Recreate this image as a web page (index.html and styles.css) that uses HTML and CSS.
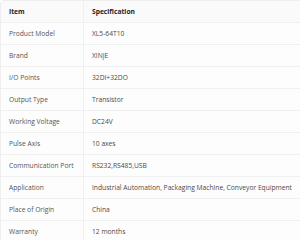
FILE: index.html
```html
<!DOCTYPE html>
<html>
<head>
<meta charset="utf-8">
<link rel="stylesheet" href="styles.css">
</head>
<body>
<div class="wrap">
<table class="spec">
<thead>
<tr><th class="k">Item</th><th>Specification</th></tr>
</thead>
<tbody>
<tr><td class="k">Product Model</td><td>XL5-64T10</td></tr>
<tr><td class="k">Brand</td><td>XINJE</td></tr>
<tr><td class="k">I/O Points</td><td>32DI+32DO</td></tr>
<tr><td class="k">Output Type</td><td>Transistor</td></tr>
<tr><td class="k">Working Voltage</td><td>DC24V</td></tr>
<tr><td class="k">Pulse Axis</td><td>10 axes</td></tr>
<tr><td class="k">Communication Port</td><td>RS232,RS485,USB</td></tr>
<tr><td class="k">Application</td><td>Industrial Automation, Packaging Machine, Conveyor Equipment</td></tr>
<tr><td class="k">Place of Origin</td><td>China</td></tr>
<tr><td class="k">Warranty</td><td>12 months</td></tr>
</tbody>
</table>
</div>
</body>
</html>
```
FILE: styles.css
```css
html, body { margin: 0; padding: 0; background: #ffffff; }
.wrap { width: 300px; height: 240px; overflow: hidden; }
.spec {
  border-collapse: separate;
  border-spacing: 0;
  width: 302px;
  font-family: "Open Sans", sans-serif;
  font-size: 6.7px;
  color: #4a4a4a;
  background: #fdfdfd;
  border: 1px solid #eeeeee;
  border-radius: 4px;
}
.spec th, .spec td {
  height: 21px;
  padding: 0 8px;
  text-align: left;
  white-space: nowrap;
  border-bottom: 1px solid #f0f0f0;
  line-height: 10px;
}
.spec th { font-weight: 700; color: #222; background: #fafafa; }
.spec .k { width: 66px; padding-left: 8px; border-right: 1px solid #f0f0f0; color: #555; }
.spec th.k { color: #222; }
.spec tbody tr:last-child td { border-bottom: none; }
```
